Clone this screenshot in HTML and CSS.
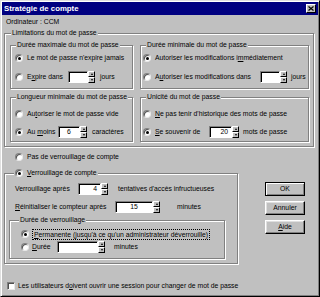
FILE: index.html
```html
<!DOCTYPE html>
<html lang="fr">
<head>
  <meta charset="UTF-8">
  <title>Stratégie de compte</title>
  <link rel="stylesheet" href="styles.css">
</head>
<body>
  <div class="dialog">
    <div class="titlebar">
      <span class="title">Stratégie de compte</span>
      <span class="close"><svg width="6" height="5" viewBox="0 0 6 5"><path d="M0.5 0.5 L5.5 4.5 M5.5 0.5 L0.5 4.5" stroke="#000" stroke-width="1.2"/></svg></span>
    </div>

    <div class="content">
      <div class="computer">Ordinateur : CCM</div>

      <div class="group limits">
        <span class="legend">Limitations du mot de passe</span>
        <div class="limits-grid">
          <div class="group box box-top col-left">
            <span class="legend">Durée maximale du mot de passe</span>
            <div class="row"><span class="radio on"></span><span>Le mot de passe n'expire jamais</span></div>
            <div class="row">
              <span class="radio"></span><span class="lbl" style="width:41px">E<u>x</u>pire dans</span>
              <span class="field" style="width:20px"></span><span class="spin"><i class="up"></i><i class="down"></i></span>
              <span class="unit" style="margin-left:5px">jours</span>
            </div>
          </div>

          <div class="group box box-top col-right">
            <span class="legend">Durée minimale du mot de passe</span>
            <div class="row"><span class="radio on"></span><span>Autoriser les modifications i<u>m</u>médiatement</span></div>
            <div class="row">
              <span class="radio"></span><span class="lbl" style="width:105px">A<u>u</u>toriser les modifications dans</span>
              <span class="field" style="width:20px"></span><span class="spin"><i class="up"></i><i class="down"></i></span>
              <span class="unit" style="margin-left:4px">jours</span>
            </div>
          </div>

          <div class="group box box-bottom col-left">
            <span class="legend">Longueur minimale du mot de passe</span>
            <div class="row"><span class="radio"></span><span>Au<u>t</u>oriser le mot de passe vide</span></div>
            <div class="row">
              <span class="radio on"></span><span class="lbl" style="width:31px">Au <u>m</u>oins</span>
              <span class="field center" style="width:22px">6</span><span class="spin"><i class="up"></i><i class="down"></i></span>
              <span class="unit" style="margin-left:5px">caractères</span>
            </div>
          </div>

          <div class="group box box-bottom col-right">
            <span class="legend">Unicité du mot de passe</span>
            <div class="row"><span class="radio"></span><span><u>N</u>e pas tenir d'historique des mots de passe</span></div>
            <div class="row">
              <span class="radio on"></span><span class="lbl" style="width:54px"><u>S</u>e souvenir de</span>
              <span class="field" style="width:23px">20</span><span class="spin"><i class="up"></i><i class="down"></i></span>
              <span class="unit" style="margin-left:4px">mots de passe</span>
            </div>
          </div>
        </div>
      </div>

      <div class="lower">
        <div class="lock-col">
          <div class="row nolock"><span class="radio"></span><span>Pas de verrouillage de compte</span></div>

          <div class="group lock">
            <span class="legend lock-legend"><span class="radio on"></span><span><u>V</u>errouillage de compte</span></span>
            <div class="row">
              <span class="lbl" style="width:63px">Verrouillage après</span>
              <span class="field" style="width:23px">4</span><span class="spin"><i class="up"></i><i class="down"></i></span>
              <span class="unit" style="margin-left:10px">tentatives d'accès infructueuses</span>
            </div>
            <div class="row row-gap">
              <span class="lbl" style="width:100px"><u>R</u>éinitialiser le compteur après</span>
              <span class="field center" style="width:38px">15</span><span class="spin"><i class="up"></i><i class="down"></i></span>
              <span class="unit" style="margin-left:17px">minutes</span>
            </div>

            <div class="group duration">
              <span class="legend">Durée de verrouillage</span>
              <div class="row"><span class="radio on"></span><span class="focus"><u>P</u>ermanente (jusqu'à ce qu'un administrateur déverrouille)</span></div>
              <div class="row row-tight">
                <span class="radio"></span><span class="lbl" style="width:25px"><u>D</u>urée</span>
                <span class="field" style="width:41px"></span><span class="spin"><i class="up"></i><i class="down"></i></span>
                <span class="unit" style="margin-left:9px">minutes</span>
              </div>
            </div>
          </div>
        </div>

        <div class="buttons">
          <span class="btn default">OK</span>
          <span class="btn">Annuler</span>
          <span class="btn"><u>A</u>ide</span>
        </div>
      </div>

      <div class="row logon"><span class="check"></span><span>Les utilisateurs d<u>o</u>ivent ouvrir une session pour changer de mot de passe</span></div>
    </div>
  </div>
</body>
</html>
```

FILE: styles.css
```css
* {
  box-sizing: border-box;
}
body {
  margin: 0;
  background: #c0c0c0;
  font-family: "Liberation Sans", Arial, sans-serif;
  font-size: 6.8px;
  line-height: 8px;
  color: #000;
}
.dialog {
  width: 320px;
  height: 297px;
  padding: 1px;
  background: #c0c0c0;
  border: 1px solid;
  border-color: #dfdfdf #000 #000 #dfdfdf;
  box-shadow: inset 1px 1px 0 #fff, inset -1px -1px 0 #808080;
}
.titlebar {
  height: 13px;
  padding: 0 2px 0 2px;
  display: flex;
  align-items: center;
  justify-content: space-between;
  background: #000080;
  color: #fff;
  font-weight: bold;
  font-size: 7.8px;
}
.close {
  width: 10px;
  height: 9px;
  display: flex;
  align-items: center;
  justify-content: center;
  background: #c0c0c0;
  border: 1px solid;
  border-color: #fff #000 #000 #fff;
}
.close svg {
  display: block;
}
.content {
  padding: 3px 0 0 2px;
}
.computer {
  height: 8px;
  margin-left: 2px;
}

/* etched group boxes */
.group {
  position: relative;
  border: 1px solid #808080;
  box-shadow: 1px 1px 0 #fff, inset 1px 1px 0 #fff;
}
.legend {
  position: absolute;
  top: -5px;
  left: 5px;
  padding: 0 1px;
  height: 8px;
  background: #c0c0c0;
  white-space: nowrap;
  display: flex;
  align-items: center;
}
.limits {
  margin-top: 7px;
  width: 310px;
  padding: 11px 4px 4px 5px;
}
.limits > .legend {
  left: 6px;
}
.limits-grid {
  display: grid;
  grid-template-columns: 123px 169px;
  grid-template-rows: 44px 45px;
  column-gap: 7px;
  row-gap: 8px;
}
.box {
  display: flex;
  flex-direction: column;
}
.box-top {
  padding-top: 6px;
  gap: 7px;
}
.box-bottom {
  padding-top: 10px;
  gap: 6px;
}
.col-left {
  padding-left: 4px;
}
.col-right {
  padding-left: 2px;
}

/* controls */
.row {
  display: flex;
  align-items: center;
  height: 12px;
  white-space: nowrap;
}
.lbl {
  flex: none;
}
.radio {
  position: relative;
  flex: none;
  width: 8px;
  height: 8px;
  margin-right: 4px;
  border-radius: 50%;
  background: #fff;
  border: 1px solid;
  border-color: #808080 #e8e8e8 #e8e8e8 #808080;
  box-shadow: inset 1px 1px 0 #505050;
}
.radio.on::after {
  content: "";
  position: absolute;
  left: 1.5px;
  top: 1.5px;
  width: 3px;
  height: 3px;
  border-radius: 50%;
  background: #000;
}
.check {
  flex: none;
  width: 8px;
  height: 8px;
  margin: 0 3px 0 3px;
  background: #fff;
  border: 1px solid;
  border-color: #808080 #e8e8e8 #e8e8e8 #808080;
  box-shadow: inset 1px 1px 0 #505050;
}
.field {
  flex: none;
  height: 12px;
  padding-right: 3px;
  background: #fff;
  border: 1px solid;
  border-color: #808080 #fff #fff #808080;
  box-shadow: inset 1px 1px 0 #000;
  text-align: right;
  line-height: 10px;
}
.field.center {
  text-align: center;
  padding: 0;
}
.spin {
  flex: none;
  width: 7px;
  height: 12px;
  display: flex;
  flex-direction: column;
}
.spin i {
  flex: 1;
  display: flex;
  align-items: center;
  justify-content: center;
  background: #c0c0c0;
  border: 1px solid;
  border-color: #fff #000 #000 #fff;
}
.spin i::after {
  content: "";
  border-left: 1.5px solid transparent;
  border-right: 1.5px solid transparent;
}
.spin .up::after {
  border-bottom: 2px solid #000;
}
.spin .down::after {
  border-top: 2px solid #000;
}

/* lower part */
.lower {
  display: flex;
}
.lock-col {
  width: 234px;
}
.nolock {
  margin-top: 4px;
  padding-left: 11px;
}
.lock {
  margin-top: 10px;
  height: 91px;
  padding: 9px 0 4px 10px;
}
.lock-legend {
  left: 9px;
}
.row-gap {
  margin-top: 6px;
}
.duration {
  margin: 7px 0 0 -6px;
  width: 216px;
  height: 39px;
  padding: 7px 0 0 11px;
}
.duration > .legend {
  left: 9px;
}
.row-tight {
  margin-top: 1px;
}
.duration .radio {
  margin-right: 3px;
}
.focus {
  padding: 0 1px;
  border: 1px dotted #000;
  line-height: 9px;
}
.buttons {
  margin: 35px 0 0 27px;
  width: 40px;
  display: flex;
  flex-direction: column;
  gap: 5px;
}
.btn {
  height: 14px;
  display: flex;
  align-items: center;
  justify-content: center;
  border: 1px solid;
  border-color: #fff #000 #000 #fff;
  box-shadow: inset -1px -1px 0 #808080, inset 1px 1px 0 #dfdfdf;
}
.btn.default {
  border-color: #000;
  box-shadow: inset 1px 1px 0 #fff, inset -1px -1px 0 #808080;
}
.logon {
  margin-top: 16px;
}
```
